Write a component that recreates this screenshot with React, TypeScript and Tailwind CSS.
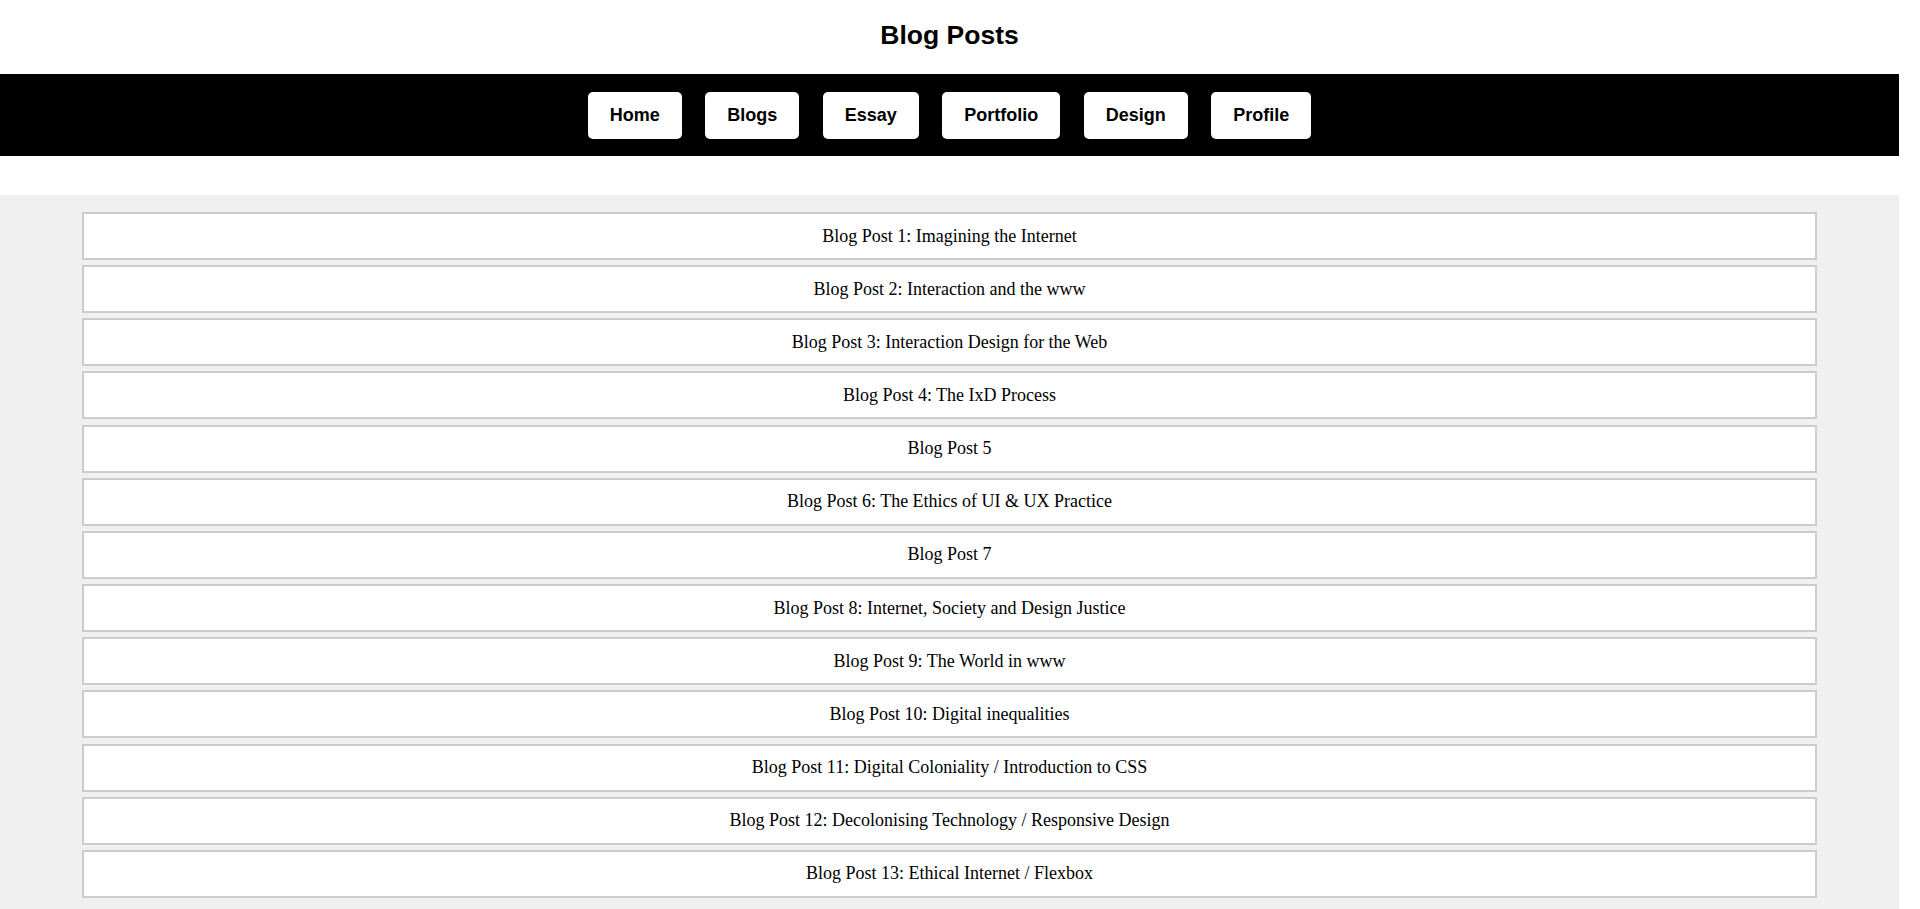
const navItems = ["Home", "Blogs", "Essay", "Portfolio", "Design", "Profile"]

const posts = [
  "Blog Post 1: Imagining the Internet",
  "Blog Post 2: Interaction and the www",
  "Blog Post 3: Interaction Design for the Web",
  "Blog Post 4: The IxD Process",
  "Blog Post 5",
  "Blog Post 6: The Ethics of UI & UX Practice",
  "Blog Post 7",
  "Blog Post 8: Internet, Society and Design Justice",
  "Blog Post 9: The World in www",
  "Blog Post 10: Digital inequalities",
  "Blog Post 11: Digital Coloniality / Introduction to CSS",
  "Blog Post 12: Decolonising Technology / Responsive Design",
  "Blog Post 13: Ethical Internet / Flexbox",
]

export default function App() {
  return (
    <div className="min-h-screen w-[1899px] bg-white font-['Liberation_Sans',Arial,sans-serif]">
      <header className="h-[74px] pt-[20px] text-center">
        <h1 className="text-[26.5px] font-bold leading-[30px] text-black">Blog Posts</h1>
      </header>

      <nav className="flex h-[82px] items-center justify-center gap-[23.5px] bg-black">
        {navItems.map((item) => (
          <a
            key={item}
            href="#"
            className="flex h-[47px] items-center rounded-[5px] bg-white px-[22px] text-[18px] font-bold text-black"
          >
            {item}
          </a>
        ))}
      </nav>

      <div className="h-[39px] bg-white" />

      <main className="bg-[#f0f0f0] px-[82px] pt-[17px] pb-[108px]">
        <ul className="flex flex-col gap-[5.17px]">
          {posts.map((post) => (
            <li
              key={post}
              className="flex h-[48px] items-center justify-center border-2 border-[#cccccc] bg-white font-['Liberation_Serif','Times_New_Roman',serif] text-[18px] text-black"
            >
              {post}
            </li>
          ))}
        </ul>
      </main>
    </div>
  )
}
